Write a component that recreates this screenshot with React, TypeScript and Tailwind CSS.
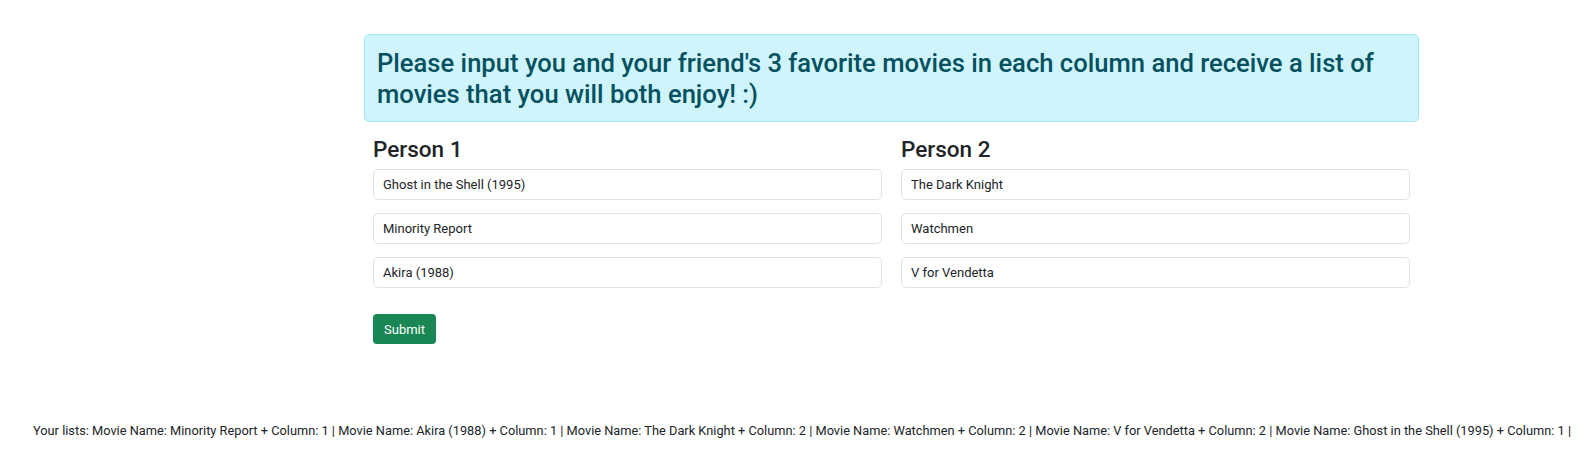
export default function App() {
  const person1 = ["Ghost in the Shell (1995)", "Minority Report", "Akira (1988)"];
  const person2 = ["The Dark Knight", "Watchmen", "V for Vendetta"];

  return (
    <div className="min-h-[474px] bg-white pt-[34px] font-['Roboto',sans-serif] text-[#212529]">
      <div className="ml-[364px] w-[1055px]">
        {/* Intro */}
        <div className="rounded-[5px] border border-[#9eeaf9] bg-[#cff4fc] px-[12px] pt-[13px] pb-[12px]">
          <h3 className="text-[25.6px] font-medium leading-[1.2] text-[#055160]">
            Please input you and your friend's 3 favorite movies in each column and receive a list of movies that you will both enjoy! :)
          </h3>
        </div>

        {/* Columns */}
        <div className="flex gap-[19px] px-[9px] pt-[14px]">
          <MovieColumn title="Person 1" movies={person1} />
          <MovieColumn title="Person 2" movies={person2} />
        </div>

        <div className="px-[9px] pt-[26px]">
          <button className="h-[30px] rounded-[4px] bg-[#198754] px-[11px] text-[13px] text-white">
            Submit
          </button>
        </div>
      </div>

      <p className="mt-[78px] pl-[12px] text-center text-[12.8px] leading-[18px] whitespace-nowrap">
        Your lists: Movie Name: Minority Report + Column: 1 | Movie Name: Akira (1988) + Column: 1 | Movie Name: The Dark Knight + Column: 2 | Movie Name: Watchmen + Column: 2 | Movie Name: V for Vendetta + Column: 2 | Movie Name: Ghost in the Shell (1995) + Column: 1 |
      </p>
    </div>
  );
}

function MovieColumn({ title, movies }: { title: string; movies: string[] }) {
  return (
    <div className="flex-1">
      <h5 className="mb-[6px] text-[22.5px] font-medium leading-[1.2]">{title}</h5>
      <div className="flex flex-col gap-[13px]">
        {movies.map((m) => (
          <input
            key={m}
            defaultValue={m}
            className="h-[31px] w-full rounded-[5px] border border-[#dee2e6] bg-white px-[9px] text-[13px] text-[#212529] outline-none"
          />
        ))}
      </div>
    </div>
  );
}
